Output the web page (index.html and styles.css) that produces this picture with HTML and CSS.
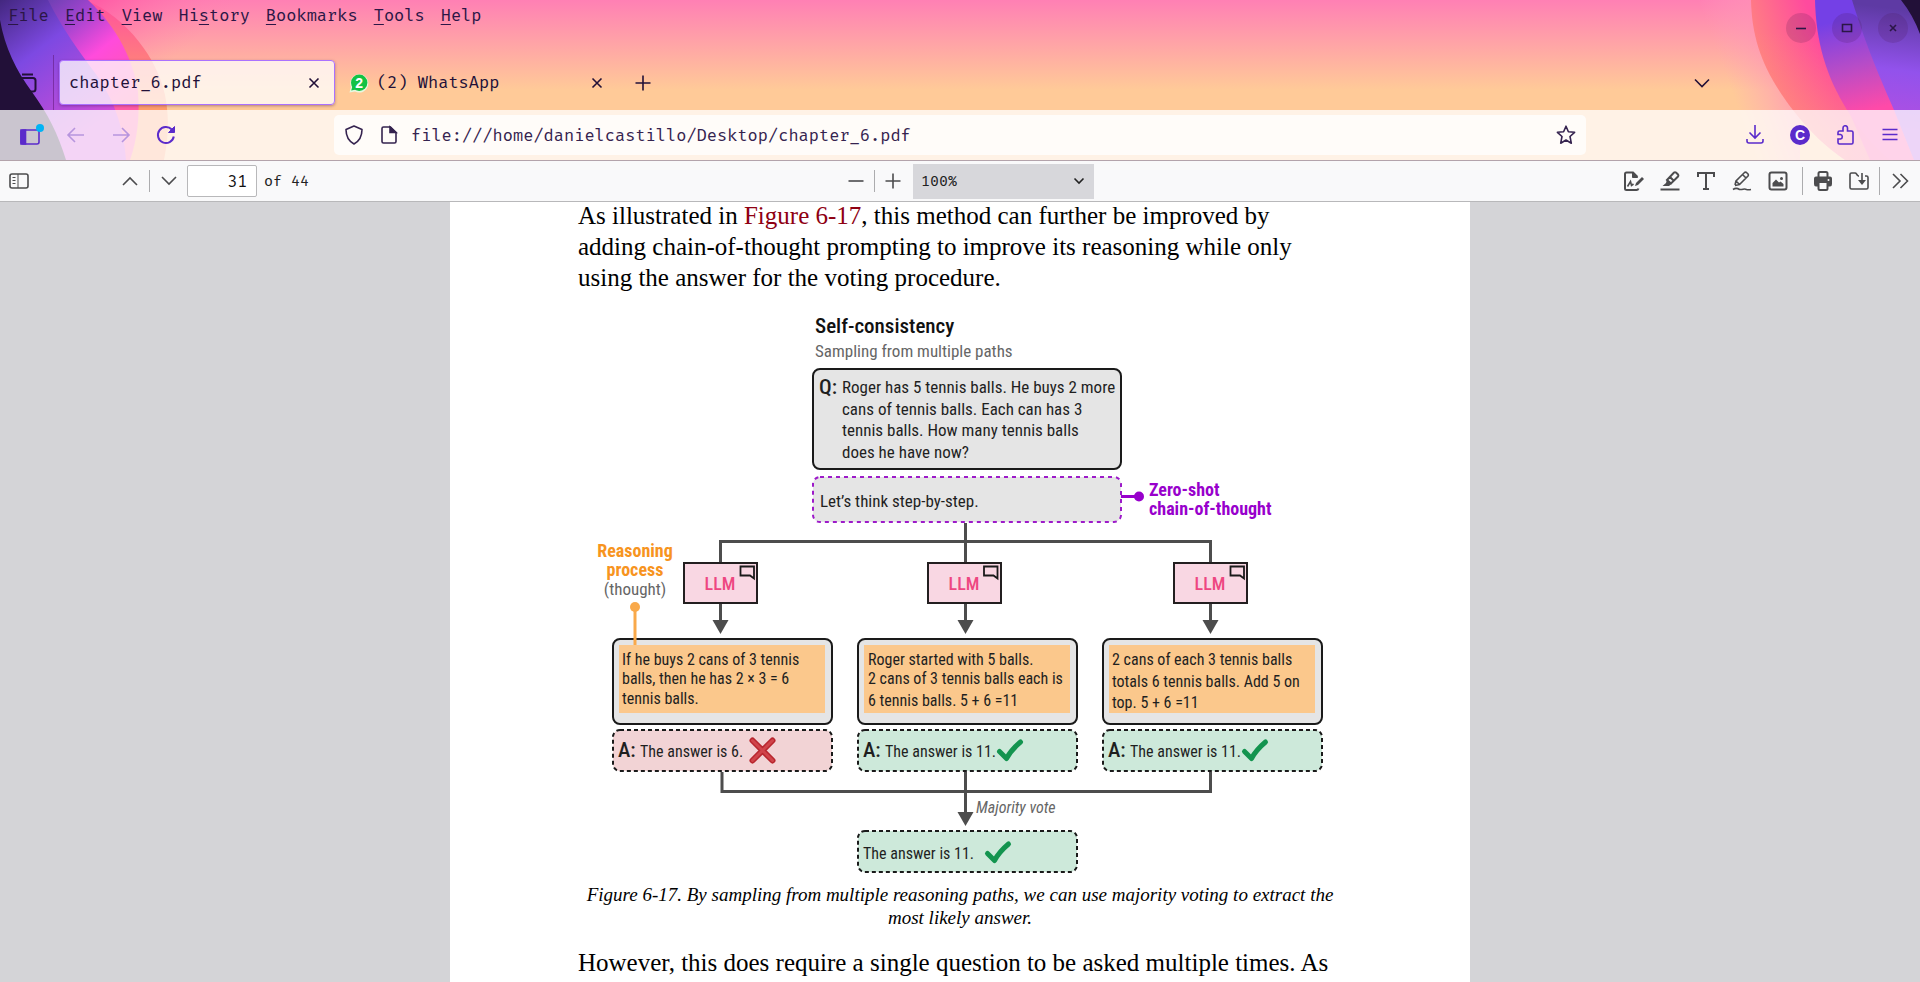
FILE: index.html
```html
<!DOCTYPE html>
<html lang="en">
<head>
<meta charset="utf-8">
<title>chapter_6.pdf</title>
<link rel="stylesheet" href="styles.css">
</head>
<body>
<header class="chrome">
  <svg class="theme theme-left" width="240" height="160" viewBox="0 0 240 160" aria-hidden="true">
    <defs>
      <linearGradient id="l-violet" gradientUnits="userSpaceOnUse" x1="0" y1="0" x2="95" y2="125"><stop offset="0" stop-color="#43277f"/><stop offset=".4" stop-color="#7d49e2"/><stop offset=".7" stop-color="#a64bdc"/><stop offset="1" stop-color="#d04bd8"/></linearGradient>
      <linearGradient id="l-magenta" gradientUnits="userSpaceOnUse" x1="50" y1="0" x2="130" y2="100"><stop offset="0" stop-color="#7040b4"/><stop offset=".25" stop-color="#a444d0"/><stop offset=".55" stop-color="#ff4bdc"/><stop offset="1" stop-color="#ff5aa5"/></linearGradient>
      <linearGradient id="l-orange" x1="0" y1="0" x2="0" y2="1"><stop offset="0" stop-color="#ff4fa0"/><stop offset=".35" stop-color="#ff7a80"/><stop offset=".65" stop-color="#ff9c6a"/></linearGradient>
      <linearGradient id="l-fade" gradientUnits="userSpaceOnUse" x1="100" y1="0" x2="160" y2="70"><stop offset="0" stop-color="#ff4fa0" stop-opacity=".7"/><stop offset="1" stop-color="#ff80b0" stop-opacity="0"/></linearGradient>
    </defs>
    <path d="M80 0H240V160H130Z" fill="url(#l-fade)"/>
    <path d="M86 0C128 18 158 60 165 95C170 120 168 140 164 160H90V0Z" fill="url(#l-orange)"/>
    <path d="M40 0H88C118 28 134 62 138 92C140 118 137 140 130 160H60Z" fill="url(#l-magenta)"/>
    <path d="M0 0H48C62 28 78 50 98 77C116 104 124 130 126 160H0Z" fill="url(#l-violet)"/>
    <path d="M0 20C5 48 16 70 32 92C48 114 58 134 66 160H0Z" fill="#221038"/>
  </svg>
  <svg class="theme theme-right" width="260" height="160" viewBox="1660 0 260 160" aria-hidden="true">
    <defs>
      <linearGradient id="r-orange" gradientUnits="userSpaceOnUse" x1="1752" y1="50" x2="1815" y2="30"><stop offset="0" stop-color="#ff8580"/><stop offset="1" stop-color="#ff4a9e"/></linearGradient>
      <linearGradient id="r-warm" x1="0" y1="0" x2="0" y2="1"><stop offset=".2" stop-color="#ff9a70" stop-opacity="0"/><stop offset=".8" stop-color="#ff9a6c" stop-opacity=".7"/></linearGradient>
      <linearGradient id="r-violet" gradientUnits="userSpaceOnUse" x1="1840" y1="20" x2="1862" y2="112"><stop offset="0" stop-color="#7440e6"/><stop offset=".5" stop-color="#b54cc8"/><stop offset="1" stop-color="#ff4aa8"/></linearGradient>
      <linearGradient id="r-light" gradientUnits="userSpaceOnUse" x1="1905" y1="10" x2="1890" y2="130"><stop offset="0" stop-color="#5e3aa4"/><stop offset=".5" stop-color="#9252ec"/><stop offset="1" stop-color="#b44fe0"/></linearGradient>
      <linearGradient id="r-haze" gradientUnits="userSpaceOnUse" x1="1720" y1="60" x2="1785" y2="36"><stop offset="0" stop-color="#ff9fc0" stop-opacity="0"/><stop offset="1" stop-color="#ff8fb4" stop-opacity=".9"/></linearGradient>
    </defs>
    <path d="M1690 0H1800V160H1740Z" fill="url(#r-haze)"/>
    <path d="M1751 0C1752 42 1764 72 1793 110C1810 132 1826 147 1845 160H1920V0Z" fill="url(#r-orange)"/>
    <path d="M1751 0C1752 42 1764 72 1793 110C1810 132 1826 147 1845 160H1870L1800 0Z" fill="url(#r-warm)" opacity=".6"/>
    <path d="M1815 0C1816 42 1826 76 1847 110C1860 130 1874 147 1890 160H1920V0Z" fill="url(#r-violet)"/>
    <path d="M1852 0C1866 46 1880 78 1894 110L1914 160H1920V0Z" fill="url(#r-light)"/>
    <path d="M1901 0Q1913 15 1920 34V0Z" fill="#221038"/>
  </svg>

  <div class="title-row">
    <nav class="menubar" aria-label="Menu bar">
      <button><u>F</u>ile</button><button><u>E</u>dit</button><button><u>V</u>iew</button><button>Hi<u>s</u>tory</button><button><u>B</u>ookmarks</button><button><u>T</u>ools</button><button><u>H</u>elp</button>
    </nav>
    <div class="window-buttons">
      <button aria-label="Minimize"><svg width="12" height="12" viewBox="0 0 12 12"><path d="M1 6.500H11"/></svg></button>
      <button aria-label="Maximize"><svg width="12" height="12" viewBox="0 0 12 12"><path d="M1.500 2.500H10.500V9.500H1.500Z"/></svg></button>
      <button aria-label="Close window"><svg width="12" height="12" viewBox="0 0 12 12"><path d="M3 3L9 9M9 3L3 9"/></svg></button>
    </div>
  </div>

  <div class="tab-row">
    <button class="view-button" aria-label="Recent browsing"><svg width="20" height="20" viewBox="0 0 20 20"><path d="M5 1.500H16M3 5H16a2.500 2.500 0 0 1 2.500 2.500V16a2.500 2.500 0 0 1-2.500 2.500H4"/></svg></button>
    <div class="tab active"><span class="tab-title">chapter_6.pdf</span><button aria-label="Close tab"><svg width="12" height="12" viewBox="0 0 12 12"><path d="M1.500 1.500L10.500 10.500M10.500 1.500L1.500 10.500"/></svg></button></div>
    <div class="tab">
      <svg class="favicon" width="20" height="20" viewBox="0 0 20 20"><path d="M.5 19.500L2 14A9 9.200 0 1 1 6 18.500Z" fill="#e8f8e0"/><circle cx="10.200" cy="9.700" r="8.200" fill="#12c244"/><path d="M2.200 17.500L3.500 13L7 16.500Z" fill="#12c244"/><text x="10.200" y="15" text-anchor="middle">2</text></svg>
      <span class="tab-title">(2) WhatsApp</span><button aria-label="Close tab"><svg width="12" height="12" viewBox="0 0 12 12"><path d="M1.500 1.500L10.500 10.500M10.500 1.500L1.500 10.500"/></svg></button></div>
    <button class="new-tab" aria-label="New tab"><svg width="16" height="16" viewBox="0 0 16 16"><path d="M8 .5V15.500M.5 8H15.500"/></svg></button>
    <button class="all-tabs" aria-label="List all tabs"><svg width="16" height="10" viewBox="0 0 16 10"><path d="M1 1.500L8 8.500L15 1.500"/></svg></button>
  </div>

  <div class="nav-bar">
    <div class="nav-left">
      <button aria-label="Sidebar"><svg width="26" height="24" viewBox="0 0 26 24"><rect x="3" y="7" width="18" height="14" rx="2"/><path d="M3 7H7.500V21H3Z" fill="currentColor"/><circle cx="22" cy="5" r="4" fill="#00b3f4" stroke="none"/></svg></button>
      <button class="dim" aria-label="Back"><svg width="20" height="20" viewBox="0 0 20 20"><path d="M18 10H2M9 3L2 10L9 17"/></svg></button>
      <button class="dim" aria-label="Forward"><svg width="20" height="20" viewBox="0 0 20 20"><path d="M2 10H18M11 3L18 10L11 17"/></svg></button>
      <button aria-label="Reload"><svg width="20" height="20" viewBox="0 0 20 20"><path d="M17.800 11.500A8 8 0 1 1 15.800 4.500" stroke-width="2"/><path d="M18.500 1.500V7.500H12.500Z" fill="currentColor" stroke-width="1"/></svg></button>
    </div>
    <div class="urlbar">
      <svg width="20" height="20" viewBox="0 0 20 20"><path d="M10 1L18 4.500C18 11 15.500 16 10 19C4.500 16 2 11 2 4.500Z" stroke-linejoin="round"/></svg>
      <svg width="20" height="20" viewBox="0 0 20 20"><path d="M4.500 2H11.500L17 7.500V16.500Q17 18 15.500 18H4.500Q3 18 3 16.500V3.500Q3 2 4.500 2Z"/><path d="M11 2V7.500H17Z" fill="currentColor"/></svg>
      <input type="text" value="file:///home/danielcastillo/Desktop/chapter_6.pdf" aria-label="Address">
      <button aria-label="Bookmark this page"><svg width="20" height="20" viewBox="0 0 20 20"><path d="M10 1.200L12.400 6.700L18.600 7.300L14 11.500L15.300 18.200L10 15L4.700 18.200L6 11.500L1.400 7.300L7.600 6.700Z" stroke-linejoin="round"/></svg></button>
    </div>
    <div class="nav-right">
      <button aria-label="Downloads"><svg width="20" height="20" viewBox="0 0 20 20"><path d="M10 0V13M4.500 7.500L10 13L15.500 7.500M2 14V16Q2 18 4 18H16Q18 18 18 16V14"/></svg></button>
      <button aria-label="Account"><svg class="account" width="20" height="20" viewBox="0 0 20 20"><circle cx="10" cy="10" r="10" fill="currentColor" stroke="none"/><text x="10" y="15" text-anchor="middle">C</text></svg></button>
      <button aria-label="Extensions"><svg width="20" height="20" viewBox="0 0 20 20"><path d="M4.500 6H8V3A2 2 0 0 1 12.500 3V6H16.500Q18 6 18 7.500V17.500Q18 19 16.500 19H4.500Q3 19 3 17.500V14H5.500A2.300 2.300 0 0 0 5.500 9.500H3V7.500Q3 6 4.500 6Z"/></svg></button>
      <button aria-label="Application menu"><svg width="20" height="20" viewBox="0 0 20 20"><path d="M2.500 4.500H17.500M2.500 9.500H17.500M2.500 14.500H17.500"/></svg></button>
    </div>
  </div>
</header>

<div class="pdf-bar">
  <div class="pdf-left">
    <button class="side-toggle" aria-label="Toggle sidebar"><svg width="20" height="16" viewBox="0 0 20 16"><rect x="1" y="1" width="18" height="14" rx="2"/><path d="M9 1V15M3.500 4.500H6.500M3.500 7.500H6.500M3.500 10.500H6.500"/></svg></button>
    <button aria-label="Previous page"><svg width="16" height="10" viewBox="0 0 16 10"><path d="M1 9L8 2L15 9"/></svg></button>
    <span class="rule short"></span>
    <button aria-label="Next page"><svg width="16" height="10" viewBox="0 0 16 10"><path d="M1 1L8 8L15 1"/></svg></button>
    <input id="page-number" type="text" value="31">
    <label for="page-number">of 44</label>
  </div>
  <div class="pdf-center">
    <button aria-label="Zoom out"><svg width="16" height="16" viewBox="0 0 16 16"><path d="M.5 8H15.500"/></svg></button>
    <span class="rule short"></span>
    <button aria-label="Zoom in"><svg width="16" height="16" viewBox="0 0 16 16"><path d="M.5 8H15.500M8 .5V15.500"/></svg></button>
    <div class="zoom-box"><select aria-label="Zoom"><option>100%</option></select><svg width="12" height="8" viewBox="0 0 12 8"><path d="M1.500 1.500L6 6L10.500 1.500"/></svg></div>
  </div>
  <div class="pdf-right">
    <div class="editor-tools">
      <button aria-label="Add signature"><svg width="20" height="20" viewBox="0 0 20 20"><path d="M14.500 17.500Q14 19 12.500 19H2.500Q1 19 1 17.500V3Q1 1.500 2.500 1.500H9L13.500 6" stroke-width="2"/><path d="M8.500 1.500V6.500H13.500Z" fill="currentColor" stroke-width="1"/><path d="M3.500 15.500L6.500 10.500L7.500 14.500L9.500 13"/><path d="M11 15L12 12L18 6L20 8L14 14Z" fill="currentColor" stroke="none"/></svg></button>
      <button aria-label="Highlight"><svg width="20" height="20" viewBox="0 0 20 20"><path d="M.5 18.500H19.500" stroke-width="2"/><path d="M7 9L14 1.500Q15 .8 16 1.500L18 3.500Q18.700 4.500 18 5.500L11 12.500ZM10 6L14 10" stroke-width="2"/><path d="M7 8.500L11.500 13L9 15H2.500L6 12Z" fill="currentColor" stroke="none"/></svg></button>
      <button aria-label="Text"><svg width="20" height="20" viewBox="0 0 20 20"><path d="M2 6V2H18V6M10 2V18M7 18H13" stroke-width="2"/></svg></button>
      <button aria-label="Draw"><svg width="20" height="20" viewBox="0 0 20 20"><path d="M3 14L4 10L12.500 1.500Q13.500 .8 14.500 1.500L16 3Q16.700 4 16 5L7.500 13.500L3 14.500M10.500 3.500L14 7M4 10L7.500 13.500M1 18.500C4 16.500 6 17.500 7.500 18.500C11 19 12 17 14.500 18.500Q16 19 19 18.500"/></svg></button>
      <button aria-label="Add image"><svg width="20" height="20" viewBox="0 0 20 20"><rect x="1.500" y="1.500" width="17" height="17" rx="2" stroke-width="2"/><path d="M4.500 15.500V12L8 8.500L11 11.500L12.500 10.500L15.500 13V15.500Z" fill="currentColor" stroke="none"/><circle cx="13.500" cy="7.500" r="1.500" fill="currentColor" stroke="none"/></svg></button>
    </div>
    <span class="rule"></span>
    <button aria-label="Print"><svg width="20" height="20" viewBox="0 0 20 20"><path d="M5.500 6V2.500Q5.500 1 7 1H13Q14.500 1 14.500 2.500V6" stroke-width="2"/><path d="M3 5.500H17Q19 5.500 19 7.500V13Q19 15.500 17 15.500H15V11H5V15.500H3Q1 15.500 1 13V7.500Q1 5.500 3 5.500Z" fill="currentColor" stroke="none"/><path d="M5.500 11H14.500V17.500Q14.500 19 13 19H7Q5.500 19 5.500 17.500Z" stroke-width="2"/><circle cx="15.500" cy="9" r="1" fill="#f9f9fa" stroke="none"/></svg></button>
    <button aria-label="Save"><svg width="20" height="20" viewBox="0 0 20 20"><path d="M9 5L7.500 3Q7 2 6 2H2.500Q1 2 1 3.500V16.500Q1 18 2.500 18H17.500Q19 18 19 16.500V6.500Q19 5 17.500 5H16M9 5H10M13 2V12"/><path d="M9 9H17L13 14Z" fill="currentColor" stroke="none"/></svg></button>
    <span class="rule"></span>
    <button aria-label="Tools"><svg width="20" height="20" viewBox="0 0 20 20"><path d="M3 3L10 10L3 17M10.500 3L17.500 10L10.500 17"/></svg></button>
  </div>
</div>

<main class="viewer">
  <article class="page">
    <p>As illustrated in <a href="#figure">Figure 6-17</a>, this method can further be improved by<br>adding chain-of-thought prompting to improve its reasoning while only<br>using the answer for the voting procedure.</p>
    <figure id="figure">
      <svg class="diagram" viewBox="578 300 764 580" role="img" aria-label="Self-consistency: sampling from multiple paths">
        <defs>
          <g id="bubble"><path d="M0 0H13.500V12L9.500 9H0Z" fill="#f9d7e3" stroke="#1a1a1a" stroke-width="1.800"/></g>
          <g id="check"><path d="M2.500 12.500L9.500 19.500Q14 11 23.500 3" fill="none" stroke="#13944f" stroke-width="5" stroke-linecap="round" stroke-linejoin="round"/></g>
          <g id="arrow-head"><path d="M-8 0H8L0 14Z" fill="#4d4d4d"/></g>
        </defs>

        <text class="heading" x="815" y="333">Self-consistency</text>
        <text class="gray" x="815" y="357">Sampling from multiple paths</text>
        <rect class="box" x="813" y="369" width="308" height="100" rx="7"/>
        <text class="letter" x="819" y="394">Q:</text>
        <text x="842" y="393">Roger has 5 tennis balls. He buys 2 more</text>
        <text x="842" y="415">cans of tennis balls. Each can has 3</text>
        <text x="842" y="436">tennis balls. How many tennis balls</text>
        <text x="842" y="458">does he have now?</text>
        <rect class="prompt" x="813" y="477" width="308" height="45" rx="7"/>
        <text x="820" y="507">Let’s think step-by-step.</text>
        <path d="M1121 496.500H1139" stroke="#9800cc" stroke-width="3"/>
        <circle cx="1139" cy="496.500" r="5" fill="#9800cc"/>
        <text class="purple" x="1149" y="496">Zero-shot</text>
        <text class="purple" x="1149" y="515">chain-of-thought</text>

        <path class="link" d="M720.500 563V541.500H1210.500V563M965.500 523V563M720.500 603V621M965.500 603V621M1210.500 603V621"/>
        <use href="#arrow-head" x="720.500" y="620"/><use href="#arrow-head" x="965.500" y="620"/><use href="#arrow-head" x="1210.500" y="620"/>
        <rect class="llm" x="684" y="563" width="73" height="40"/><rect class="llm" x="928" y="563" width="73" height="40"/><rect class="llm" x="1174" y="563" width="73" height="40"/>
        <use href="#bubble" x="740.500" y="566.500"/><use href="#bubble" x="984" y="566.500"/><use href="#bubble" x="1230.500" y="566.500"/>
        <text class="llm-text" x="720" y="590">LLM</text><text class="llm-text" x="964" y="590">LLM</text><text class="llm-text" x="1210" y="590">LLM</text>

        <text class="orange" x="635" y="557">Reasoning</text>
        <text class="orange" x="635" y="576">process</text>
        <text class="gray mid" x="635" y="595">(thought)</text>

        <rect class="box" x="613" y="639" width="219" height="85" rx="7"/><rect class="box" x="858" y="639" width="219" height="85" rx="7"/><rect class="box" x="1103" y="639" width="219" height="85" rx="7"/>
        <path d="M619 645H825V713H619ZM864 645H1070V713H864ZM1109 645H1315V713H1109Z" fill="#fbc88c"/>
        <path d="M635 607V645" stroke="#f9a94a" stroke-width="3"/><circle cx="635" cy="607" r="5" fill="#f9a94a"/>
        <g class="small">
          <text x="622" y="665">If he buys 2 cans of 3 tennis</text>
          <text x="622" y="684">balls, then he has 2 × 3 = 6</text>
          <text x="622" y="704">tennis balls.</text>
          <text x="868" y="665">Roger started with 5 balls.</text>
          <text x="868" y="684">2 cans of 3 tennis balls each is</text>
          <text x="868" y="706">6 tennis balls. 5 + 6 =11</text>
          <text x="1112" y="665">2 cans of each 3 tennis balls</text>
          <text x="1112" y="687">totals 6 tennis balls. Add 5 on</text>
          <text x="1112" y="708">top. 5 + 6 =11</text>
        </g>

        <rect class="answer wrong" x="613" y="730" width="219" height="41" rx="7"/><rect class="answer" x="858" y="730" width="219" height="41" rx="7"/><rect class="answer" x="1103" y="730" width="219" height="41" rx="7"/>
        <text class="letter" x="618" y="757">A:</text><text class="letter" x="863" y="757">A:</text><text class="letter" x="1108" y="757">A:</text>
        <g class="small">
          <text x="640" y="757">The answer is 6.</text>
          <text x="885" y="757">The answer is 11.</text>
          <text x="1130" y="757">The answer is 11.</text>
        </g>
        <path d="M752.500 740.500L772.500 760.500M772.500 740.500L752.500 760.500" stroke="#b8262e" stroke-width="6" stroke-linecap="round"/>
        <path d="M752.500 740.500L772.500 760.500M772.500 740.500L752.500 760.500" stroke="#d0444a" stroke-width="3" stroke-linecap="round"/>
        <use href="#check" x="997" y="739"/><use href="#check" x="1242" y="739"/>

        <path class="link" d="M722 772V791.500H1210.500V772M965.500 772V813"/>
        <use href="#arrow-head" x="965.500" y="812"/>
        <text class="gray vote" x="976" y="813">Majority vote</text>
        <rect class="answer" x="858" y="831" width="219" height="41" rx="7"/>
        <text class="small" x="863" y="859">The answer is 11.</text>
        <use href="#check" x="985" y="841"/>
      </svg>
      <figcaption>Figure 6-17. By sampling from multiple reasoning paths, we can use majority voting to extract the<br>most likely answer.</figcaption>
    </figure>
    <p>However, this does require a single question to be asked multiple times. As</p>
  </article>
</main>
</body>
</html>
```
FILE: styles.css
```css
* { box-sizing: border-box; }

body {
  margin: 0;
  height: 100vh;
  display: flex;
  flex-direction: column;
  overflow: hidden;
  background: #d4d4d7;
  font-family: "Fira Mono", "DejaVu Sans Mono", "Liberation Mono", monospace;
  font-size: 17px;
  color: #2b1646;
}

button, input, select {
  font: inherit;
  color: inherit;
  background: none;
  border: 0;
  margin: 0;
  padding: 0;
}

button {
  display: flex;
  align-items: center;
  justify-content: center;
}

svg { fill: none; stroke: currentColor; stroke-width: 1.6; flex: none; }
svg text { stroke: none; }

/* Browser chrome */
.chrome {
  position: relative;
  flex: none;
  background: linear-gradient(#ff80b4, #ffca98 90px);
  border-bottom: 1px solid #b3a3ab;
}

.theme { position: absolute; top: 0; stroke: none; }
.theme-left { left: 0; }
.theme-right { right: 0; }

.title-row, .tab-row, .nav-bar { position: relative; display: flex; }

.title-row { height: 55px; align-items: flex-start; justify-content: space-between; }
.menubar { display: flex; gap: 16px; padding: 5px 8px; line-height: 22px; }
.menubar u { text-underline-offset: 3px; text-decoration-thickness: 1px; }

.window-buttons { display: flex; gap: 16px; padding: 13px 12px; }
.window-buttons button { width: 30px; height: 30px; border-radius: 50%; background: rgba(70, 20, 80, .18); }

.tab-row { height: 55px; align-items: center; color: #221038; }
.view-button { width: 54px; height: 55px; border-right: 1px solid rgba(90, 20, 110, .5); }
.view-button svg { stroke-width: 2; }
.tab { display: flex; align-items: center; width: 276px; height: 45px; margin-left: 5px; padding: 0 12px 0 10px; }
.tab.active { padding: 0 14px 0 9px; background: rgba(255, 255, 255, .76); border: 1px solid #ab71ff; border-radius: 4px; box-shadow: 0 1px 3px rgba(60, 20, 90, .4); }
.tab + .tab { margin-left: 4px; }
.tab-title { flex: 1; }
.favicon { stroke: none; margin-right: 8px; }
.favicon text { font: bold 14px "Liberation Sans", sans-serif; fill: #fff; }
.new-tab { width: 48px; height: 40px; margin-left: 4px; }
.all-tabs { width: 40px; height: 40px; margin-left: auto; margin-right: 198px; }

.nav-bar { height: 50px; align-items: center; background: rgba(255, 255, 255, .76); color: #5b2bcb; }
.nav-left, .nav-right { display: flex; width: 334px; padding: 0 8px; }
.nav-right { justify-content: flex-end; }
.nav-left button, .nav-right button { width: 45px; height: 40px; }
.nav-left .dim { color: #b795de; }
.account text { font: bold 14px "Liberation Sans", sans-serif; fill: #fff; }
.urlbar { flex: 1; display: flex; align-items: center; height: 40px; gap: 12px; padding: 0 10px; border-radius: 5px; background: #fffcf9; color: #35234f; }
.urlbar svg:nth-child(2) { margin-left: 3px; }
.urlbar input { flex: 1; min-width: 0; outline: 0; }

/* PDF toolbar */
.pdf-bar {
  flex: none;
  display: grid;
  grid-template-columns: 1fr auto 1fr;
  height: 41px;
  background: #f9f9fa;
  border-bottom: 1px solid #b8b8ba;
  color: #4c4c4e;
  font-size: 15px;
}
.pdf-left, .pdf-center, .pdf-right, .editor-tools { display: flex; align-items: center; }
.pdf-bar button { width: 36px; height: 36px; }
.pdf-left { padding-left: 1px; }
.pdf-left .side-toggle { margin-right: 75px; }
.side-toggle svg path { stroke-width: 1; }
.rule { width: 1px; height: 28px; background: #acacae; margin: 0 2px; }
.rule.short { height: 22px; margin: 0; }
.pdf-left .rule { margin: 0 1px; }
.pdf-left input { width: 70px; height: 32px; border: 1px solid #b8b8ba; border-radius: 2px; background: #fff; color: #111; text-align: right; padding: 0 9px; font-size: 16px; }
.pdf-left label { padding-left: 7px; color: #222; }
.pdf-center { padding-left: 12px; }
.zoom-box { display: flex; align-items: center; width: 181px; height: 35px; margin-left: 2px; padding: 0 9px 0 8px; background: #d7d7db; color: #222; }
.zoom-box select { flex: 1; height: 35px; appearance: none; outline: 0; }
.pdf-right { justify-content: flex-end; padding-right: 2px; }
.editor-tools { padding-right: 4px; }

/* Document */
.viewer { flex: 1; min-height: 0; overflow: hidden; }
.page {
  max-width: 1020px;
  min-height: calc(100% + 2px);
  margin: -2px auto 0;
  padding: 0 128px;
  background: #fff;
  color: #000;
  font-family: "Liberation Serif", serif;
  font-size: 25px;
  line-height: 31px;
}
.page p { margin: 0; }
.page a { color: #8e0012; text-decoration: none; }
.page figure { margin: 7px 0 18px; }
.page figcaption { margin-top: 3px; font-size: 19px; line-height: 23px; font-style: italic; text-align: center; }

/* Diagram */
.diagram { display: block; width: 100%; stroke: none; font: 17px "Roboto Condensed", "Open Sans", sans-serif; }
.diagram text { fill: #1f1f1f; }
.diagram .small { font-size: 16px; }
.diagram .heading { font-size: 21px; font-weight: 500; fill: #111; }
.diagram .letter { font-size: 21px; font-weight: 500; }
.diagram .gray { fill: #666; }
.diagram .mid { text-anchor: middle; }
.diagram .vote { font-size: 16px; font-style: italic; }
.diagram .purple { font-weight: 700; font-size: 18px; fill: #9800cc; }
.diagram .orange { font-weight: 700; font-size: 18px; fill: #f7941e; text-anchor: middle; }
.diagram .llm-text { font-size: 18px; font-weight: 500; fill: #ee4681; text-anchor: middle; }
.diagram .link { stroke: #4d4d4d; stroke-width: 3; }
.diagram .box { fill: #e5e5e5; stroke: #1a1a1a; stroke-width: 2; }
.diagram .prompt { fill: #e5e5e5; stroke: #9d1bc9; stroke-width: 2; stroke-dasharray: 4 4; }
.diagram .llm { fill: #f9d7e3; stroke: #231f20; stroke-width: 2; }
.diagram .answer { fill: #cde9da; stroke: #1a1a1a; stroke-width: 2; stroke-dasharray: 4 3; }
.diagram .wrong { fill: #f2d3d5; }
```
